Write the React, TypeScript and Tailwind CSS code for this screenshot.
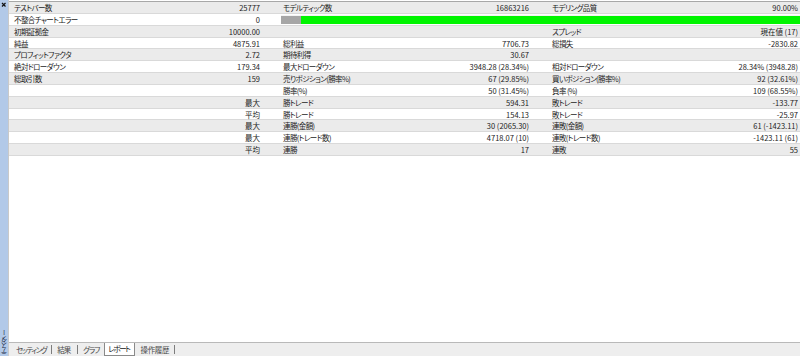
import React from "react";

type Row = { cells: string[]; bar?: boolean };

const rows: Row[] = [
  { cells: ["テストバー数", "25777", "モデルティック数", "16863216", "モデリング品質", "90.00%"] },
  { cells: ["不整合チャートエラー", "0"], bar: true },
  { cells: ["初期証拠金", "10000.00", "", "", "スプレッド", "現在値 (17)"] },
  { cells: ["純益", "4875.91", "総利益", "7706.73", "総損失", "-2830.82"] },
  { cells: ["プロフィットファクタ", "2.72", "期待利得", "30.67", "", ""] },
  { cells: ["絶対ドローダウン", "179.34", "最大ドローダウン", "3948.28 (28.34%)", "相対ドローダウン", "28.34% (3948.28)"] },
  { cells: ["総取引数", "159", "売りポジション(勝率%)", "67 (29.85%)", "買いポジション(勝率%)", "92 (32.61%)"] },
  { cells: ["", "", "勝率(%)", "50 (31.45%)", "負率 (%)", "109 (68.55%)"] },
  { cells: ["", "最大", "勝トレード", "594.31", "敗トレード", "-133.77"] },
  { cells: ["", "平均", "勝トレード", "154.13", "敗トレード", "-25.97"] },
  { cells: ["", "最大", "連勝(金額)", "30 (2065.30)", "連敗(金額)", "61 (-1423.11)"] },
  { cells: ["", "最大", "連勝(トレード数)", "4718.07 (10)", "連敗(トレード数)", "-1423.11 (61)"] },
  { cells: ["", "平均", "連勝", "17", "連敗", "55"] },
];

function Pair({ label, value }: { label: string; value: string }) {
  return (
    <div className="flex items-center justify-between pl-[5px] pr-[18px] whitespace-nowrap">
      <span className="tracking-[-0.6px]">{label}</span>
      <span>{value}</span>
    </div>
  );
}

export default function App() {
  return (
    <div className="w-[800px] h-[356px] overflow-hidden flex bg-white text-[#1c1c1c] text-[7.5px] leading-[11px] font-['Noto_Sans_CJK_JP','Noto_Sans',sans-serif] [font-feature-settings:'palt']">
      {/* left dock bar */}
      <div className="w-[8px] shrink-0 bg-[#b2c9e8] flex flex-col justify-between items-center">
        <svg width="8" height="8" viewBox="0 0 8 8" className="mt-[1px]">
          <path d="M2 2 L5.5 5.5 M5.5 2 L2 5.5" stroke="#111" strokeWidth="1.2" />
        </svg>
        <div className="[writing-mode:vertical-rl] rotate-180 text-[6.5px] leading-[7px] tracking-[-0.3px] text-[#1d2b47] mb-[1px]">
          テスター
        </div>
      </div>

      {/* main panel */}
      <div className="flex-1 min-w-0 flex flex-col border-l border-[#c9c9c9]">
        <div className="flex-1 overflow-hidden pt-[1px]">
          <div className="w-[807px] border-t border-[#a8a8a8]">
            {rows.map((r, i) => (
              <div
                key={i}
                className={`grid grid-cols-[269px_269px_269px] h-[11.85px] border-b border-[#d9d9d9] ${
                  i % 2 === 0 ? "bg-[#ebebeb]" : "bg-white"
                }`}
              >
                <Pair label={r.cells[0]} value={r.cells[1]} />
                {r.bar ? (
                  <div className="col-span-2 flex items-center pl-[3px]">
                    <div className="flex w-full h-[9px] border-t border-[#f4f4f4]">
                      <div className="w-[20px] bg-[#a6a6a6]" />
                      <div className="flex-1 bg-[#00f500]" />
                    </div>
                  </div>
                ) : (
                  <>
                    <Pair label={r.cells[2]} value={r.cells[3]} />
                    <Pair label={r.cells[4]} value={r.cells[5]} />
                  </>
                )}
              </div>
            ))}
          </div>
        </div>

        {/* bottom tab strip */}
        <div className="h-[14px] shrink-0 bg-[#eeeeee] border-t border-[#b9b9b9] flex items-start pl-[7px] text-[#4a4a4a]">
          <span className="mt-[1px] tracking-[-1.4px]">セッティング</span>
          <span className="ml-[5px] mt-[2px] w-px h-[9px] bg-[#7d7d7d]" />
          <span className="ml-[5px] mt-[1px] tracking-[-1px]">結果</span>
          <span className="ml-[7px] mt-[2px] w-px h-[9px] bg-[#7d7d7d]" />
          <span className="ml-[5px] mt-[1px] tracking-[-1.2px]">グラフ</span>
          <span className="ml-[5px] h-[13px] bg-white border-x border-b border-[#8a8a8a] pl-[3px] pr-[4px] tracking-[-1.4px] text-[#111]">
            レポート
          </span>
          <span className="ml-[6px] mt-[1px] tracking-[-0.4px]">操作履歴</span>
          <span className="ml-[5px] mt-[2px] w-px h-[9px] bg-[#7d7d7d]" />
        </div>
      </div>
    </div>
  );
}
